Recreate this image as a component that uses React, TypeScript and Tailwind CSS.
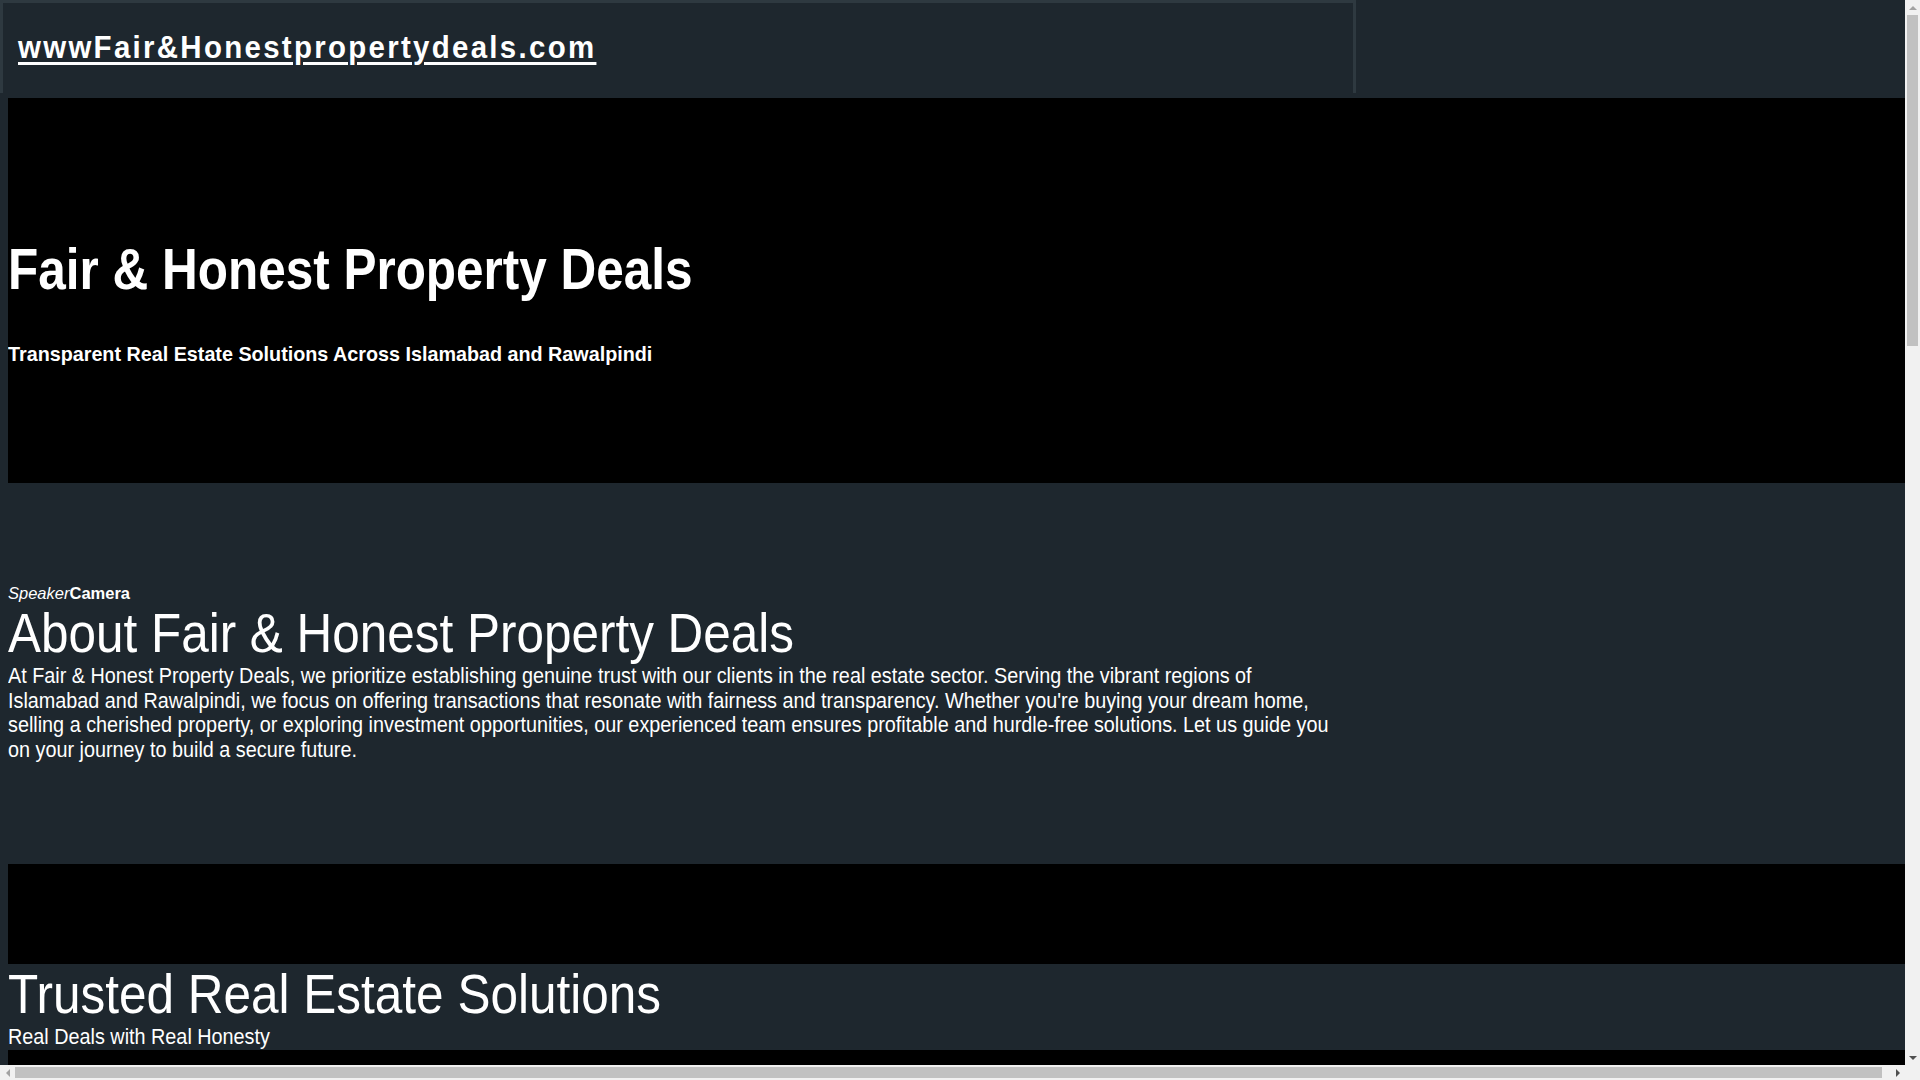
import React from 'react';

const font = "font-['Liberation_Sans_Narrow','Liberation_Sans',Arial,sans-serif]";

const Header = () => (
  <div className="w-[1356px] h-[93px] border-[3px] border-b-0 border-[#2e3940] flex items-center pl-[15px] pb-[2px]">
    <a href="#" className="inline-block origin-left scale-x-[0.92] text-white text-[32px] font-bold tracking-[2.5px] underline underline-offset-[4px] decoration-[3px] leading-none">
      wwwFair&amp;Honestpropertydeals.com
    </a>
  </div>
);

const Hero = () => (
  <section className="ml-2 mt-[5px] w-full h-[385px] bg-black pt-[139px]">
    <h1 className="origin-left scale-x-[0.868] text-white text-[57px] font-bold leading-[64px]">Fair &amp; Honest Property Deals</h1>
    <p className="origin-left scale-x-[0.94] text-white text-[21px] font-bold leading-[24px] mt-[41px]">
      Transparent Real Estate Solutions Across Islamabad and Rawalpindi
    </p>
  </section>
);

const About = () => (
  <section className="ml-2 pt-[100px] pb-[102px]">
    <div className="text-white text-[16.5px] leading-[20px]">
      <i>Speaker</i>
      <b>Camera</b>
    </div>
    <h2 className="origin-left scale-x-[0.883] text-white text-[56px] leading-[64px] -mt-[2px]">About Fair &amp; Honest Property Deals</h2>
    <p className="origin-left scale-x-[0.9] w-[1483px] text-white text-[22px] leading-[24.5px] -mt-[1px]">
      At Fair &amp; Honest Property Deals, we prioritize establishing genuine trust with our clients in the real estate
      sector. Serving the vibrant regions of Islamabad and Rawalpindi, we focus on offering transactions that resonate
      with fairness and transparency. Whether you're buying your dream home, selling a cherished property, or exploring
      investment opportunities, our experienced team ensures profitable and hurdle-free solutions. Let us guide you on
      your journey to build a secure future.
    </p>
  </section>
);

const Solutions = () => (
  <section className="ml-2 w-full">
    <div className="h-[100px] bg-black" />
    <h2 className="origin-left scale-x-[0.884] text-white text-[56px] leading-[64px] -mt-[2px]">Trusted Real Estate Solutions</h2>
    <p className="origin-left scale-x-[0.9] text-white text-[22px] leading-[24px] -mt-[1px]">Real Deals with Real Honesty</p>
    <div className="h-[420px] bg-black mt-[1px]" />
    <div className="h-[200px]" />
    <div className="h-[420px] bg-black" />
    <div className="h-[200px]" />
    <div className="h-[420px] bg-black" />
    <div className="h-[600px]" />
  </section>
);

// window scrollbars as they show in the screenshot
const Scrollbars = () => (
  <>
    <div className="fixed top-0 right-0 w-[15px] h-[1065px] bg-[#f1f1f1] flex flex-col items-center">
      <div className="h-[15px] flex items-center justify-center">
        <div className="w-0 h-0 border-x-[4px] border-x-transparent border-b-[4px] border-b-[#a3a3a3]" />
      </div>
      <div className="w-[11px] h-[331px] bg-[#c1c1c1]" />
      <div className="flex-1" />
      <div className="h-[15px] flex items-center justify-center">
        <div className="w-0 h-0 border-x-[4px] border-x-transparent border-t-[4px] border-t-[#505050]" />
      </div>
    </div>
    <div className="fixed bottom-0 left-0 w-[1905px] h-[15px] bg-[#f1f1f1] flex items-center">
      <div className="w-[15px] flex items-center justify-center">
        <div className="w-0 h-0 border-y-[4px] border-y-transparent border-r-[4px] border-r-[#a3a3a3]" />
      </div>
      <div className="w-[1867px] h-[11px] bg-[#c1c1c1]" />
      <div className="flex-1" />
      <div className="w-[15px] flex items-center justify-center">
        <div className="w-0 h-0 border-y-[4px] border-y-transparent border-l-[4px] border-l-[#505050]" />
      </div>
    </div>
    <div className="fixed bottom-0 right-0 w-[15px] h-[15px] bg-[#f1f1f1]" />
  </>
);

export default function App() {
  return (
    <div className={`min-h-screen overflow-hidden bg-[#1e272e] ${font}`}>
      <Header />
      <Hero />
      <About />
      <Solutions />
      <Scrollbars />
    </div>
  );
}
